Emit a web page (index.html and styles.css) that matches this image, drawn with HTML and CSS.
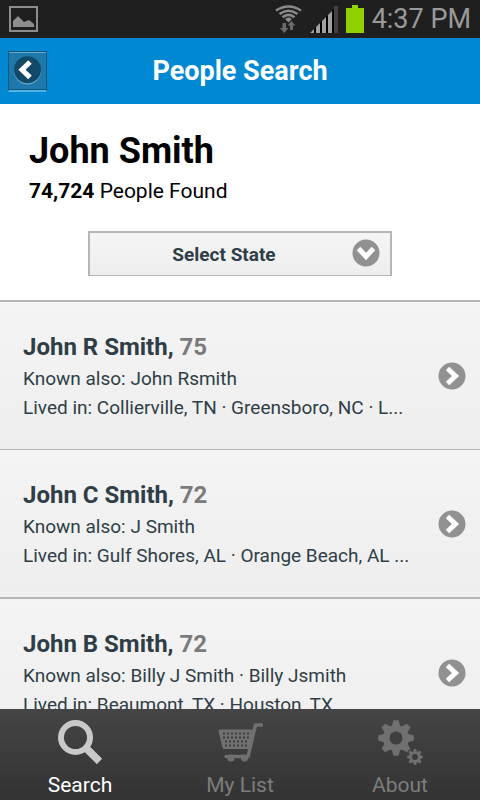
FILE: index.html
```html
<!DOCTYPE html>
<html lang="en">
<head>
  <meta charset="UTF-8" />
  <meta name="viewport" content="width=device-width, initial-scale=1" />
  <title>People Search</title>
  <link rel="stylesheet" href="styles.css">
</head>
<body>
  <!-- shared shapes -->
  <svg class="defs" width="0" height="0" aria-hidden="true">
    <symbol id="arrow" viewBox="0 0 28 28">
      <circle cx="14" cy="14" r="13.5" fill="#919191" />
      <path d="M9.500 6.500 L17.500 14 L9.500 21.500" fill="none" stroke="#fff" stroke-width="5" />
    </symbol>
    <symbol id="gear" viewBox="-18 -18 36 36">
      <circle r="9.800" fill="none" stroke="#707070" stroke-width="6.500" />
      <g id="teeth" fill="#707070">
        <path id="tooth" d="M-4.500 -11 L-2.500 -17.800 H2.500 L4.500 -11 Z" />
        <use href="#tooth" transform="rotate(45)" />
        <use href="#tooth" transform="rotate(90)" />
        <use href="#tooth" transform="rotate(135)" />
        <use href="#tooth" transform="rotate(180)" />
        <use href="#tooth" transform="rotate(225)" />
        <use href="#tooth" transform="rotate(270)" />
        <use href="#tooth" transform="rotate(315)" />
      </g>
    </symbol>
  </svg>

  <div class="status-bar">
    <svg class="picture" width="30" height="26" viewBox="0 0 30 26" aria-hidden="true">
      <rect x="1" y="1" width="27" height="24" fill="none" stroke="#8d8d8d" stroke-width="2" />
      <path d="M4 21 V15 L9 10 L15 16 L20 14 L25 18 V21 Z" fill="#8d8d8d" />
    </svg>
    <div class="status-right">
      <svg width="28" height="28" viewBox="0 0 28 28" aria-hidden="true">
        <g fill="none" stroke="#8a8a8a" stroke-width="2.600">
          <path d="M2 5.500 Q14.500 -2.500 27 5.500" />
          <path d="M5.500 9 Q14.500 2.500 23.500 9" />
          <path d="M8.500 12.300 Q14.500 7.500 20.500 12.300" />
        </g>
        <path d="M11 14 Q14.500 11 18 14 L14.500 17.500 Z" fill="#8a8a8a" />
        <path d="M8.500 18 H12 V23 H14.500 L10.250 28 L6 23 H8.500 Z" fill="#6a6a6a" />
        <path d="M16 25 H19 V20.500 H21.500 L17.500 16 L13.500 20.500 H16 Z" fill="#6a6a6a" />
      </svg>
      <svg width="28" height="28" viewBox="0 0 28 28" aria-hidden="true">
        <path d="M0 28 L24 4 V28 Z" fill="#000" />
        <rect x="24" y="1" width="4" height="27" fill="#424242" />
        <path d="M0 28 L4 24 V28 Z M6 28 V22 L10 18 V28 Z M12 28 V16 L16 12 V28 Z M18 28 V10 L22 6 V28 Z" fill="#a0a0a0" />
      </svg>
      <svg width="18" height="28" viewBox="0 0 18 28" aria-hidden="true">
        <path d="M0 3 H6 V0 H12 V3 H18 V28 H0 Z" fill="#91d100" />
      </svg>
      <span class="clock">4:37 PM</span>
    </div>
  </div>

  <header class="title-bar">
    <button class="back" type="button" aria-label="Back">
      <svg width="28" height="30" viewBox="0 0 28 30" aria-hidden="true">
        <circle cx="13.500" cy="15" r="13.500" fill="#64acd3" />
        <circle cx="13.500" cy="13.700" r="13.500" fill="#114a68" />
        <path d="M16 6 L8 13.700 L16 21.400" fill="none" stroke="#fff" stroke-width="5" />
      </svg>
    </button>
    <h1>People Search</h1>
  </header>

  <main>
    <section class="summary">
      <h2>John Smith</h2>
      <p><b>74,724</b> People Found</p>
      <div class="state">
        <select aria-label="Select State">
          <option>Select State</option>
        </select>
        <svg class="state-arrow" aria-hidden="true"><use href="#arrow" /></svg>
      </div>
    </section>

    <ul class="results">
      <li>
        <a href="#">
          <div class="person">
            <h3>John R Smith, <span>75</span></h3>
            <p>Known also: John Rsmith</p>
            <p>Lived in: Collierville, TN · Greensboro, NC · L...</p>
          </div>
          <svg class="arrow" aria-hidden="true"><use href="#arrow" /></svg>
        </a>
      </li>
      <li>
        <a href="#">
          <div class="person">
            <h3>John C Smith, <span>72</span></h3>
            <p>Known also: J Smith</p>
            <p>Lived in: Gulf Shores, AL · Orange Beach, AL ...</p>
          </div>
          <svg class="arrow" aria-hidden="true"><use href="#arrow" /></svg>
        </a>
      </li>
      <li>
        <a href="#">
          <div class="person">
            <h3>John B Smith, <span>72</span></h3>
            <p>Known also: Billy J Smith · Billy Jsmith</p>
            <p>Lived in: Beaumont, TX · Houston, TX</p>
          </div>
          <svg class="arrow" aria-hidden="true"><use href="#arrow" /></svg>
        </a>
      </li>
    </ul>
  </main>

  <nav class="tabs">
    <a class="active" href="#">
      <svg width="46" height="46" viewBox="0 0 46 46" aria-hidden="true">
        <circle cx="18.500" cy="17.500" r="14.500" fill="none" stroke="#c9c9c9" stroke-width="6" />
        <path d="M28 27 L42.500 41.500" stroke="#c9c9c9" stroke-width="7.500" />
      </svg>
      Search
    </a>
    <a href="#">
      <svg width="46" height="46" viewBox="0 0 46 46" aria-hidden="true">
        <path d="M44.500 5 H38.500 L31 36.500 H9" fill="none" stroke="#707070" stroke-width="3.500" stroke-linecap="round" stroke-linejoin="round" />
        <path d="M3 11 H35 L31 27.500 H7 Z" fill="#707070" stroke="#707070" stroke-width="3" stroke-linejoin="round" />
        <path d="M6 13.500 H34 M6 17.500 H33 M8 21.500 H32 M8 25.500 H31" stroke="#3f3f3f" stroke-width="2" stroke-dasharray="2 2" />
        <circle cx="14" cy="38" r="3.500" fill="#707070" />
        <circle cx="27.500" cy="38" r="3.500" fill="#707070" />
      </svg>
      My List
    </a>
    <a href="#">
      <svg width="46" height="46" viewBox="0 0 46 46" aria-hidden="true">
        <use href="#gear" x="1" y="0" width="36" height="36" />
        <use href="#gear" x="30" y="29" width="16" height="16" />
      </svg>
      About
    </a>
  </nav>
</body>
</html>
```
FILE: styles.css
```css
* {
  box-sizing: border-box;
}
body {
  margin: 0;
  height: 100vh;
  display: flex;
  flex-direction: column;
  background: #fff;
  color: #000;
  font-family: Roboto, "Liberation Sans", sans-serif;
  overflow: hidden;
}
h1, h2, h3, p, ul {
  margin: 0;
  padding: 0;
}
a {
  color: inherit;
  text-decoration: none;
}
svg {
  display: block;
  flex: none;
}
.defs {
  position: absolute;
}

/* phone status bar */
.status-bar {
  display: flex;
  flex: none;
  justify-content: space-between;
  align-items: center;
  height: 38px;
  padding: 0 9px;
  background: #1f1f1f;
}
.status-right {
  display: flex;
  align-items: center;
  gap: 8px;
}
.clock {
  color: #9a9a9a;
  font-size: 27px;
  line-height: 38px;
}

.title-bar {
  display: grid;
  grid-template-columns: 39px 1fr 39px;
  flex: none;
  align-items: center;
  height: 66px;
  padding: 0 8px;
  background: #0089d2;
  color: #fff;
}
.title-bar h1 {
  font-size: 27px;
  line-height: 32px;
  text-align: center;
}
.back {
  display: flex;
  align-items: center;
  justify-content: center;
  width: 39px;
  height: 41px;
  padding: 0;
  border: 1px solid #11567d;
  border-bottom: 2px solid #4db3e8;
  background: #1f78aa;
  box-shadow: inset 0 1px #63acd3, inset 0 -1px #11567d;
}

main {
  flex: 1;
  min-height: 0;
  overflow-y: auto;
  scrollbar-width: none;
}
.summary {
  padding: 25px 29px 24px;
}
.summary h2 {
  font-size: 36px;
  line-height: 44px;
}
.summary p {
  margin-top: 5px;
  font-size: 21px;
  line-height: 26px;
}
.state {
  position: relative;
  width: 72%;
  margin: 27px auto 0;
}
.state select {
  display: block;
  width: 100%;
  height: 45px;
  padding: 0 32px 0 0;
  appearance: none;
  border: 2px solid #b6b6b6;
  border-bottom-width: 1px;
  border-radius: 0;
  background: linear-gradient(#f4f4f4, #eeeeee);
  color: #2f3e46;
  font-family: inherit;
  font-size: 19px;
  font-weight: bold;
  text-align-last: center;
}
.state-arrow {
  position: absolute;
  top: 8px;
  right: 12px;
  width: 28px;
  height: 28px;
  transform: rotate(90deg);
  pointer-events: none;
}

.results {
  list-style: none;
}
.results li {
  border-top: 2px solid #b6b6b6;
  background: linear-gradient(#f4f4f4, #eeeeee);
}
.results li:nth-child(even) {
  border-top-width: 1px;
}
.results a {
  display: flex;
  align-items: center;
  gap: 8px;
  padding: 28px 14px 27px 23px;
  color: #2f3e46;
}
.person {
  flex: 1;
  min-width: 0;
}
.person h3 {
  font-size: 24px;
  line-height: 34px;
}
.person h3 span {
  color: #7b7b7b;
}
.person p {
  overflow: hidden;
  font-size: 19px;
  line-height: 29px;
  white-space: nowrap;
  text-overflow: ellipsis;
}
.arrow {
  width: 28px;
  height: 28px;
}

.tabs {
  display: flex;
  flex: none;
  height: 91px;
  background: linear-gradient(#454545, #333333);
}
.tabs a {
  display: flex;
  flex: 1;
  flex-direction: column;
  align-items: center;
  gap: 7px;
  padding-top: 11px;
  color: #7d7d7d;
  font-size: 21px;
  line-height: 24px;
}
.tabs .active {
  color: #fff;
}
```
